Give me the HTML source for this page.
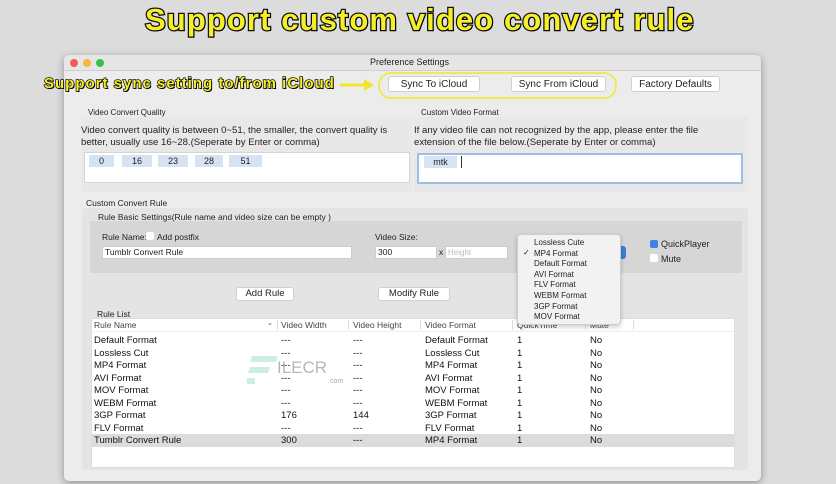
<!DOCTYPE html>
<html><head><meta charset="utf-8"><style>
*{margin:0;padding:0;box-sizing:border-box}
body{width:836px;height:484px;background:#dcdcdc;font-family:"Liberation Sans",sans-serif;position:relative;overflow:hidden;color:#222}
.a{position:absolute;white-space:nowrap}
.t{font-size:9px}
.btn{position:absolute;background:#fff;border:1px solid #d0d0d0;border-radius:3px;font-size:10px;text-align:center;line-height:15px;color:#222}
.yl{color:#f5ef2a;font-weight:bold;-webkit-text-stroke:1.5px #111;paint-order:stroke fill;text-shadow:1px 1px 0 #000}
.tok{position:absolute;background:#d6e3f2;font-size:9px;text-align:center;line-height:12px;top:155px}
.row{position:absolute;left:91px;width:644px;height:12.6px;font-size:9.5px;color:#111}
.row span{position:absolute;top:1px}
</style></head><body>
<div class="a yl" style="left:145px;top:2px;font-size:31px;letter-spacing:1.1px;-webkit-text-stroke:2.5px #111">Support custom video convert rule</div>

<div class="a" style="left:64px;top:55px;width:697px;height:426px;background:#ececec;border-radius:5px;box-shadow:0 2px 8px rgba(0,0,0,.35)"></div>
<div class="a" style="left:64px;top:55px;width:697px;height:16px;background:#e6e6e6;border-radius:5px 5px 0 0;border-bottom:1px solid #d0d0d0"></div>
<div class="a" style="left:70px;top:59px;width:8px;height:8px;border-radius:50%;background:#f25c54"></div>
<div class="a" style="left:83px;top:59px;width:8px;height:8px;border-radius:50%;background:#f6b93b"></div>
<div class="a" style="left:96px;top:59px;width:8px;height:8px;border-radius:50%;background:#36c24a"></div>
<div class="a t" style="left:370px;top:57px">Preference Settings</div>

<div class="a yl" style="left:44px;top:75px;font-size:15px;letter-spacing:1px">Support sync setting to/from iCloud</div>
<svg class="a" style="left:340px;top:78px" width="36" height="14"><path d="M0 7H26" stroke="#f0e62a" stroke-width="3"/><path d="M24 1L34 7L24 13Z" fill="#f0e62a"/></svg>
<div class="a" style="left:378px;top:72px;width:239px;height:27px;border:2.5px solid #eeea55;border-radius:13px"></div>
<div class="btn" style="left:388px;top:76px;width:92px;height:16px">Sync To iCloud</div>
<div class="btn" style="left:511px;top:76px;width:95px;height:16px">Sync From iCloud</div>
<div class="btn" style="left:631px;top:76px;width:89px;height:16px">Factory Defaults</div>

<div class="a t" style="left:88px;top:108px;font-size:8px">Video Convert Quality</div>
<div class="a" style="left:82px;top:117px;width:330px;height:75px;background:#e8e8e8"></div>
<div class="a" style="left:81px;top:125px;font-size:9.6px;line-height:12px;color:#222">Video convert quality is between 0~51, the smaller, the convert quality is<br>better, usually use 16~28.(Seperate by Enter or comma)</div>
<div class="a" style="left:84px;top:152px;width:326px;height:31px;background:#fff;border:1px solid #d5d5d5"></div>
<div class="tok" style="left:89px;width:25px">0</div>
<div class="tok" style="left:122px;width:30px">16</div>
<div class="tok" style="left:158px;width:30px">23</div>
<div class="tok" style="left:195px;width:28px">28</div>
<div class="tok" style="left:229px;width:33px">51</div>

<div class="a t" style="left:421px;top:108px;font-size:8px">Custom Video Format</div>
<div class="a" style="left:414px;top:117px;width:334px;height:75px;background:#e8e8e8"></div>
<div class="a" style="left:414px;top:125px;font-size:9.6px;line-height:12px;color:#222">If any video file can not recognized by the app, please enter the file<br>extension of the file below.(Seperate by Enter or comma)</div>
<div class="a" style="left:417px;top:153px;width:326px;height:31px;background:#fff;border:2px solid #9dbde2"></div>
<div class="tok" style="left:424px;width:33px;top:156px">mtk</div>
<div class="a" style="left:461px;top:156px;width:1px;height:12px;background:#333"></div>

<div class="a t" style="left:86px;top:198px;font-size:8.5px">Custom Convert Rule</div>
<div class="a" style="left:82px;top:208px;width:666px;height:262px;background:#e4e4e4;border-radius:3px"></div>
<div class="a" style="left:90px;top:221px;width:652px;height:52px;background:#d6d6d6;border-radius:2px"></div>
<div class="a" style="left:98px;top:212px;font-size:8.5px">Rule Basic Settings(Rule name and video size can be empty )</div>
<div class="a t" style="left:102px;top:232px;font-size:8.5px">Rule Name:</div>
<div class="a" style="left:146px;top:232px;width:8px;height:8px;background:#fff;border-radius:2px"></div>
<div class="a t" style="left:157px;top:232px;font-size:8.5px">Add postfix</div>
<div class="a" style="left:102px;top:246px;width:250px;height:13px;background:#fff;border:1px solid #ccc;font-size:8.5px;padding-left:2px;line-height:11px">Tumblr Convert Rule</div>
<div class="a t" style="left:375px;top:232px;font-size:8.5px">Video Size:</div>
<div class="a" style="left:375px;top:246px;width:62px;height:13px;background:#fff;border:1px solid #ccc;font-size:8.5px;padding-left:2px;line-height:11px">300</div>
<div class="a t" style="left:439px;top:247px;font-size:8.5px">x</div>
<div class="a" style="left:445px;top:246px;width:63px;height:13px;background:#fff;border:1px solid #ccc;font-size:8px;padding-left:2px;line-height:11px;color:#bbb">Height</div>
<div class="a" style="left:616px;top:246px;width:10px;height:13px;background:#3b7ed8;border-radius:3px"></div>
<div class="a" style="left:650px;top:240px;width:8px;height:8px;background:#3b84e0;border-radius:2px"></div>
<div class="a t" style="left:661px;top:239px;font-size:9px">QuickPlayer</div>
<div class="a" style="left:650px;top:254px;width:8px;height:8px;background:#fff;border-radius:2px"></div>
<div class="a t" style="left:661px;top:254px;font-size:9px">Mute</div>

<div class="btn" style="left:236px;top:287px;width:58px;height:14px;font-size:9.5px;line-height:12px">Add Rule</div>
<div class="btn" style="left:378px;top:287px;width:72px;height:14px;font-size:9.5px;line-height:12px">Modify Rule</div>

<div class="a" style="left:97px;top:309px;font-size:8.5px">Rule List</div>
<div class="a" style="left:91px;top:318px;width:644px;height:150px;background:#fff;border:1px solid #ddd"></div>
<div class="a" style="left:91px;top:318px;width:644px;height:14px;border-bottom:1px solid #eee;font-size:8.5px;color:#444">
<span class="a" style="left:3px;top:2px">Rule Name</span><span class="a" style="left:176px;top:1px;font-size:7px">&#8964;</span>
<span class="a" style="left:190px;top:2px">Video Width</span><span class="a" style="left:262px;top:2px">Video Height</span>
<span class="a" style="left:334px;top:2px">Video Format</span><span class="a" style="left:426px;top:2px">QuickTime</span><span class="a" style="left:499px;top:2px">Mute</span>
<div class="a" style="left:186px;top:2px;width:1px;height:10px;background:#ddd"></div>
<div class="a" style="left:257px;top:2px;width:1px;height:10px;background:#ddd"></div>
<div class="a" style="left:329px;top:2px;width:1px;height:10px;background:#ddd"></div>
<div class="a" style="left:421px;top:2px;width:1px;height:10px;background:#ddd"></div>
<div class="a" style="left:494px;top:2px;width:1px;height:10px;background:#ddd"></div>
<div class="a" style="left:542px;top:2px;width:1px;height:10px;background:#ddd"></div>
</div>

<div class="row" style="top:334px"><span style="left:3px">Default Format</span><span style="left:190px">---</span><span style="left:262px">---</span><span style="left:334px">Default Format</span><span style="left:426px">1</span><span style="left:499px">No</span></div>
<div class="row" style="top:347px"><span style="left:3px">Lossless Cut</span><span style="left:190px">---</span><span style="left:262px">---</span><span style="left:334px">Lossless Cut</span><span style="left:426px">1</span><span style="left:499px">No</span></div>
<div class="row" style="top:359px"><span style="left:3px">MP4 Format</span><span style="left:190px">---</span><span style="left:262px">---</span><span style="left:334px">MP4 Format</span><span style="left:426px">1</span><span style="left:499px">No</span></div>
<div class="row" style="top:372px"><span style="left:3px">AVI Format</span><span style="left:190px">---</span><span style="left:262px">---</span><span style="left:334px">AVI Format</span><span style="left:426px">1</span><span style="left:499px">No</span></div>
<div class="row" style="top:384px"><span style="left:3px">MOV Format</span><span style="left:190px">---</span><span style="left:262px">---</span><span style="left:334px">MOV Format</span><span style="left:426px">1</span><span style="left:499px">No</span></div>
<div class="row" style="top:397px"><span style="left:3px">WEBM Format</span><span style="left:190px">---</span><span style="left:262px">---</span><span style="left:334px">WEBM Format</span><span style="left:426px">1</span><span style="left:499px">No</span></div>
<div class="row" style="top:409px"><span style="left:3px">3GP Format</span><span style="left:190px">176</span><span style="left:262px">144</span><span style="left:334px">3GP Format</span><span style="left:426px">1</span><span style="left:499px">No</span></div>
<div class="row" style="top:422px"><span style="left:3px">FLV Format</span><span style="left:190px">---</span><span style="left:262px">---</span><span style="left:334px">FLV Format</span><span style="left:426px">1</span><span style="left:499px">No</span></div>
<div class="row" style="top:434px;background:#dcdcdc"><span style="left:3px">Tumblr Convert Rule</span><span style="left:190px">300</span><span style="left:262px">---</span><span style="left:334px">MP4 Format</span><span style="left:426px">1</span><span style="left:499px">No</span></div>

<div class="a" style="left:251px;top:356px;width:26px;height:6px;background:#cdeee2;transform:skewX(-20deg)"></div>
<div class="a" style="left:249px;top:367px;width:20px;height:6px;background:#cdeee2;transform:skewX(-20deg)"></div>
<div class="a" style="left:247px;top:378px;width:8px;height:6px;background:#cdeee2"></div>
<div class="a" style="left:277px;top:358px;font-size:17px;color:#999;opacity:.7">ILECR</div>
<div class="a" style="left:328px;top:378px;font-size:7px;color:#aaa">.com</div>

<div class="a" style="left:517px;top:234px;width:104px;height:91px;background:#f2f2f2;border:1px solid #ccc;border-radius:4px;box-shadow:0 2px 5px rgba(0,0,0,.2);font-size:8px;line-height:10.6px;padding-top:3px;padding-left:16px;color:#222">
Lossless Cute<br>MP4 Format<br>Default Format<br>AVI Format<br>FLV Format<br>WEBM Format<br>3GP Format<br>MOV Format
<span class="a" style="left:5px;top:13px">✓</span></div>
</body></html>
